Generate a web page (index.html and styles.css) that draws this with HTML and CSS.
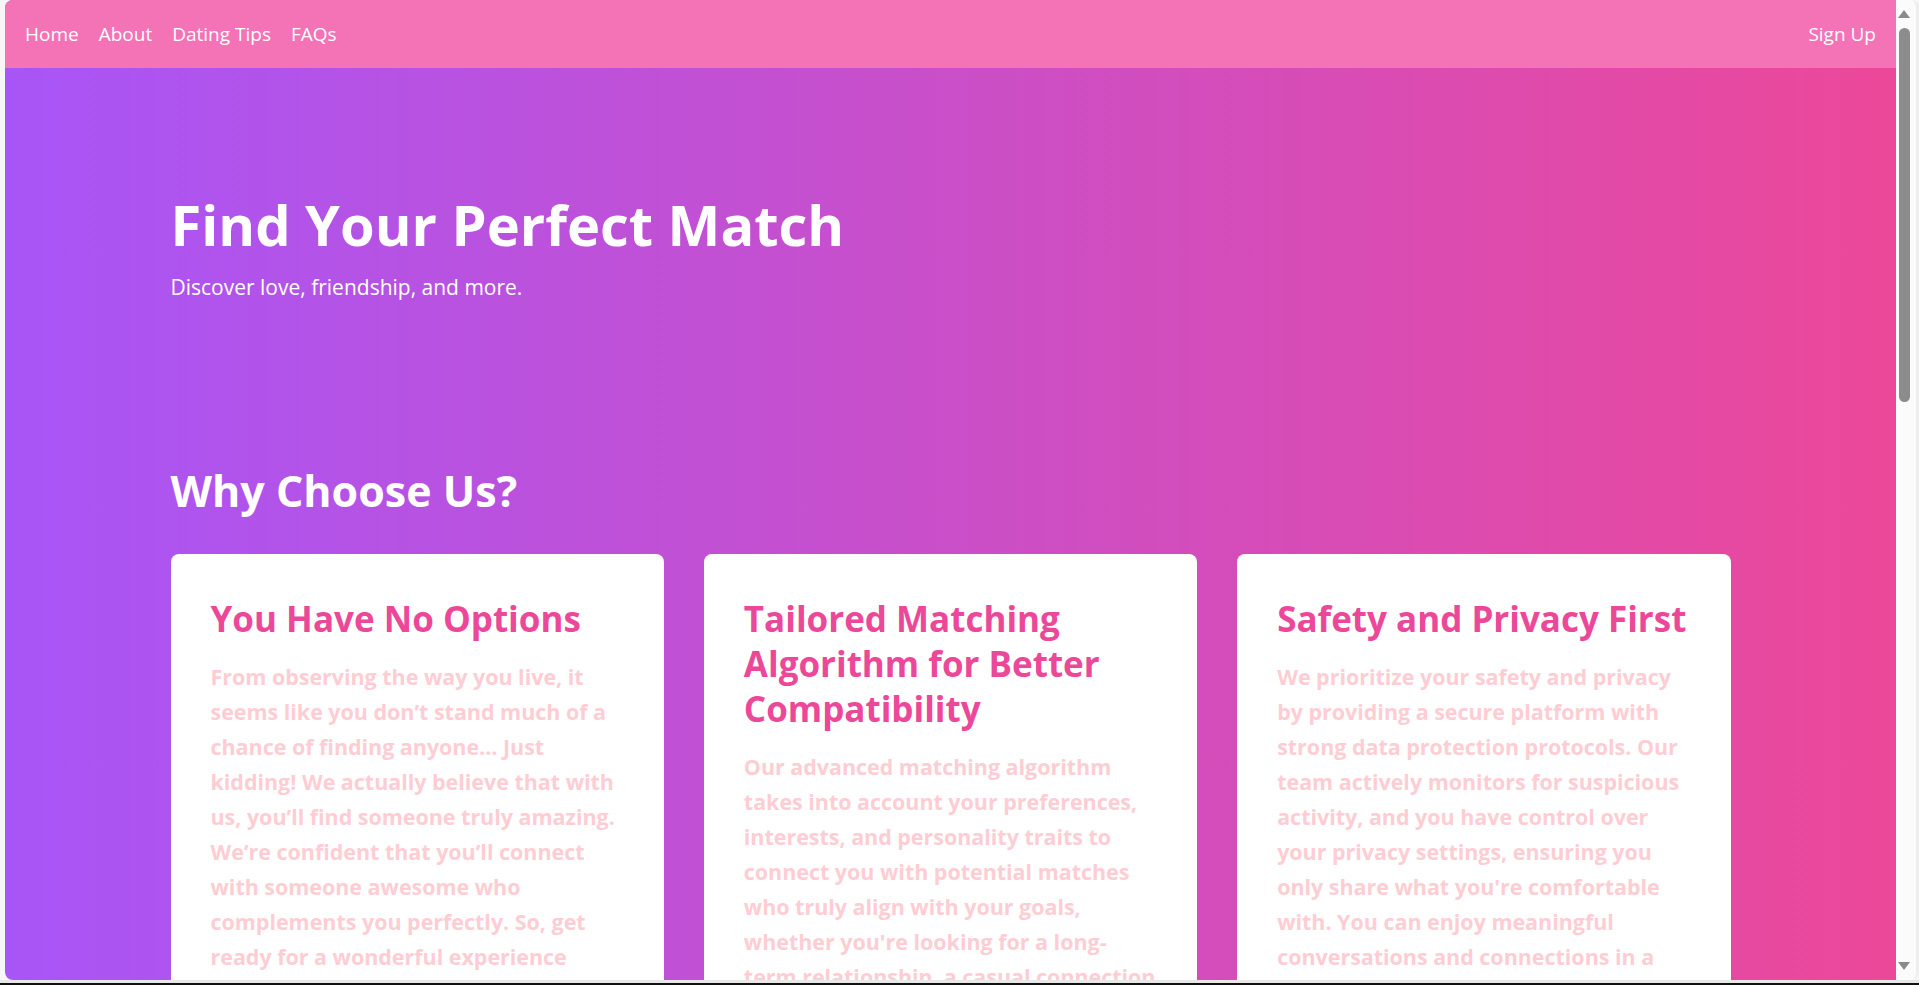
FILE: index.html
```html
<!DOCTYPE html>
<html lang="en">
<head>
<meta charset="utf-8">
<title>Find Your Perfect Match</title>
<link rel="stylesheet" href="styles.css">
</head>
<body>
<div class="window">
  <div class="viewport">
    <nav class="topnav">
      <div class="nav-links">
        <a href="#" class="nav-link">Home</a>
        <a href="#" class="nav-link">About</a>
        <a href="#" class="nav-link">Dating Tips</a>
        <a href="#" class="nav-link">FAQs</a>
      </div>
      <a href="#" class="nav-link">Sign Up</a>
    </nav>
    <main class="page">
      <section class="hero container">
        <h1 class="hero-title">Find Your Perfect Match</h1>
        <p class="hero-sub">Discover love, friendship, and more.</p>
      </section>
      <section class="features container">
        <h2 class="section-title">Why Choose Us?</h2>
        <div class="cards">
          <article class="card">
            <h3 class="card-title">You Have No Options</h3>
            <p class="card-text">From observing the way you live, it seems like you don’t stand much of a chance of finding anyone... Just kidding! We actually believe that with us, you’ll find someone truly amazing. We’re confident that you’ll connect with someone awesome who complements you perfectly. So, get ready for a wonderful experience waiting for you!</p>
          </article>
          <article class="card">
            <h3 class="card-title">Tailored Matching Algorithm for Better Compatibility</h3>
            <p class="card-text">Our advanced matching algorithm takes into account your preferences, interests, and personality traits to connect you with potential matches who truly align with your goals, whether you're looking for a long-term relationship, a casual connection or something in between.</p>
          </article>
          <article class="card">
            <h3 class="card-title">Safety and Privacy First</h3>
            <p class="card-text">We prioritize your safety and privacy by providing a secure platform with strong data protection protocols. Our team actively monitors for suspicious activity, and you have control over your privacy settings, ensuring you only share what you're comfortable with. You can enjoy meaningful conversations and connections in a welcoming and respectful environment.</p>
          </article>
        </div>
      </section>
    </main>
  </div>
  <div class="scrollbar" aria-hidden="true">
    <span class="sb-arrow sb-up"></span>
    <span class="sb-thumb"></span>
    <span class="sb-space"></span>
    <span class="sb-arrow sb-down"></span>
  </div>
</div>
<div class="bottom-edge"></div>
</body>
</html>
```
FILE: styles.css
```css
* { box-sizing: border-box; }

html, body {
  margin: 0;
  padding: 0;
  height: 985px;
  overflow: hidden;
  background: #f6f6f6;
  font-family: "Open Sans", "Noto Sans", sans-serif;
}

.window {
  display: flex;
  height: 980px;
  padding-left: 5px;
}

.viewport {
  flex: 1;
  min-width: 0;
  height: 980px;
  overflow: hidden;
  border-radius: 8px 0 0 8px;
  background: linear-gradient(to right, #a855f7, #ec4899);
}

.topnav {
  display: flex;
  justify-content: space-between;
  align-items: center;
  height: 68px;
  padding: 20px;
  background: #f472b6;
}

.nav-links {
  display: flex;
  gap: 20px;
}

.nav-link {
  color: #ffffff;
  text-decoration: none;
  font-size: 19px;
  line-height: 28px;
}

.container {
  max-width: 1560px;
  margin: 0 auto;
}

.hero {
  padding: 128px 0 128px;
  color: #ffffff;
}

.hero-title {
  margin: 0 0 21px;
  font-size: 56px;
  line-height: 56px;
  font-weight: 700;
}

.hero-sub {
  margin: 0;
  font-size: 21px;
  line-height: 28px;
}

.features {
  padding-top: 38px;
}

.section-title {
  margin: 0 0 39px;
  color: #ffffff;
  font-size: 43px;
  line-height: 48px;
  font-weight: 700;
}

.cards {
  display: grid;
  grid-template-columns: repeat(3, 1fr);
  gap: 40px;
}

.card {
  background: #ffffff;
  border-radius: 8px;
  padding: 42px 40px 40px;
}

.card-title {
  margin: 0 0 18px;
  color: #ec4899;
  font-size: 35px;
  line-height: 45px;
  font-weight: 700;
}

.card-text {
  margin: 0;
  color: #fecdd3;
  font-size: 21.45px;
  line-height: 35px;
  font-weight: 700;
}

.scrollbar {
  width: 23px;
  height: 980px;
  display: flex;
  flex-direction: column;
  align-items: center;
  padding: 10px 4px 10px 0;
  background: #fbfbfb;
  border-radius: 0 8px 8px 0;
  border-right: 3px solid #eeeeee;
}

.sb-arrow {
  width: 0;
  height: 0;
  border-left: 6px solid transparent;
  border-right: 6px solid transparent;
}

.sb-up {
  border-bottom: 8px solid #8a8a8a;
}

.sb-down {
  border-top: 8px solid #8a8a8a;
}

.sb-thumb {
  width: 11px;
  height: 374px;
  margin-top: 10px;
  border-radius: 6px;
  background: #8c8c8c;
}

.sb-space {
  flex: 1;
}

.bottom-edge {
  height: 5px;
  background: #e8e8e8;
  border-bottom: 2px solid #111111;
}
```
